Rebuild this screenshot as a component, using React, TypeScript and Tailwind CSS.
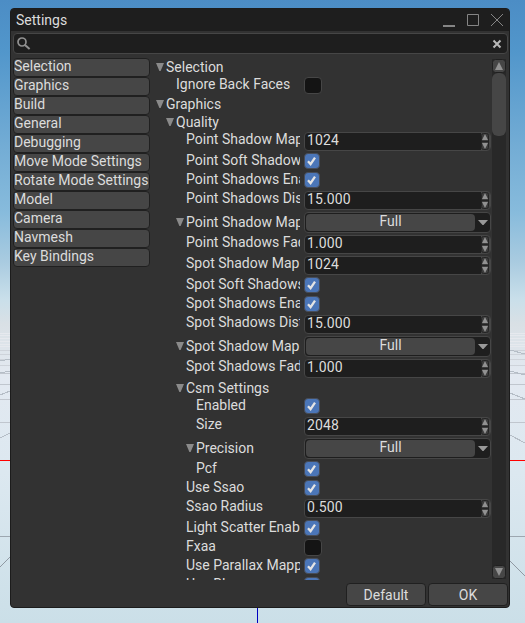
import React from "react";

type Kind = "header" | "check" | "num" | "combo";
type Row = { kind: Kind; label: string; level: number; value?: string; on?: boolean };

const rows: Row[] = [
  { kind: "header", label: "Selection", level: 0 },
  { kind: "check", label: "Ignore Back Faces", level: 1 },
  { kind: "header", label: "Graphics", level: 0 },
  { kind: "header", label: "Quality", level: 1 },
  { kind: "num", label: "Point Shadow Map", level: 2, value: "1024" },
  { kind: "check", label: "Point Soft Shadow", level: 2, on: true },
  { kind: "check", label: "Point Shadows Ena", level: 2, on: true },
  { kind: "num", label: "Point Shadows Dist", level: 2, value: "15.000" },
  { kind: "combo", label: "Point Shadow Map", level: 2, value: "Full" },
  { kind: "num", label: "Point Shadows Fad", level: 2, value: "1.000" },
  { kind: "num", label: "Spot Shadow Map", level: 2, value: "1024" },
  { kind: "check", label: "Spot Soft Shadows", level: 2, on: true },
  { kind: "check", label: "Spot Shadows Ena", level: 2, on: true },
  { kind: "num", label: "Spot Shadows Dist", level: 2, value: "15.000" },
  { kind: "combo", label: "Spot Shadow Map", level: 2, value: "Full" },
  { kind: "num", label: "Spot Shadows Fad", level: 2, value: "1.000" },
  { kind: "header", label: "Csm Settings", level: 2 },
  { kind: "check", label: "Enabled", level: 3, on: true },
  { kind: "num", label: "Size", level: 3, value: "2048" },
  { kind: "combo", label: "Precision", level: 3, value: "Full" },
  { kind: "check", label: "Pcf", level: 3, on: true },
  { kind: "check", label: "Use Ssao", level: 2, on: true },
  { kind: "num", label: "Ssao Radius", level: 2, value: "0.500" },
  { kind: "check", label: "Light Scatter Enab", level: 2, on: true },
  { kind: "check", label: "Fxaa", level: 2 },
  { kind: "check", label: "Use Parallax Mapp", level: 2, on: true },
  { kind: "check", label: "Use Bloom", level: 2, on: true },
];

const sections = ["Selection", "Graphics", "Build", "General", "Debugging", "Move Mode Settings", "Rotate Mode Settings", "Model", "Camera", "Navmesh", "Key Bindings"];

const rowHeight: Record<Kind, string> = { header: "h-[18px]", check: "h-[19px]", num: "h-[21px]", combo: "h-[23px]" };
const labelPad: Record<Kind, string> = { header: "", check: "-mt-px", num: "-mt-px", combo: "mt-[2px]" };
const indent = ["pl-0", "pl-[10px]", "pl-[20px]", "pl-[30px]"];

function Arrow() {
  return (
    <svg width="10" height="16" className="shrink-0" viewBox="0 0 10 16">
      <path d="M1 4h8L5.6 12H4.4z" fill="#8a8a8a" />
    </svg>
  );
}

function Check({ on }: { on?: boolean }) {
  if (!on) return <div className="h-[17px] w-[18px] rounded-[4px] border border-[#464646] bg-[#141414]" />;
  return (
    <div className="h-[16px] w-[16px] rounded-[4px] border border-[#484d58] bg-[#4b76b8]">
      <svg width="14" height="14" viewBox="0 0 14 14">
        <path d="M3 7.2l2.6 3L10 3.6" fill="none" stroke="#e4e4e4" strokeWidth="2.3" />
      </svg>
    </div>
  );
}

function NumberField({ value }: { value?: string }) {
  return (
    <div className="flex h-[19px] w-[187px] overflow-hidden rounded-[4px] border border-[#464646] bg-[#1e1e1e]">
      <span className="flex-1 pl-[2px] leading-[14px] tracking-[0.1px]">{value}</span>
      <svg width="9" height="17" viewBox="0 0 9 17">
        <rect width="9" height="17" fill="#464646" />
        <rect x="0.5" y="0.5" width="7" height="16" rx="2" fill="#3c3c3c" stroke="#242424" />
        <path d="M4 1l3 6H1zM1 10h6l-3 6z" fill="#919191" />
        <path d="M1 8.5h6" stroke="#242424" />
      </svg>
    </div>
  );
}

function Combo({ value }: { value?: string }) {
  return (
    <div className="flex h-[21px] w-[187px] rounded-[4px] border border-[#464646] bg-[#1e1e1e] py-px pl-px">
      <span className="h-[17px] w-[169px] rounded-[4px] bg-[#464646] text-center leading-[15px]">{value}</span>
      <svg width="15" height="17" viewBox="0 0 15 17">
        <path d="M3 6h10L8.5 11h-1z" fill="#999" />
      </svg>
    </div>
  );
}

function SettingRow({ row }: { row: Row }) {
  const hasArrow = row.kind === "header" || row.kind === "combo";
  return (
    <div className={`flex shrink-0 ${rowHeight[row.kind]}`}>
      <div className={`flex h-[18px] w-[145px] shrink-0 overflow-hidden ${indent[row.level]} ${labelPad[row.kind]}`}>
        {hasArrow ? <Arrow /> : <span className="w-[10px] shrink-0" />}
        <span className="whitespace-nowrap pl-px leading-4">{row.label}</span>
      </div>
      <div className="ml-1">
        {row.kind === "check" && <Check on={row.on} />}
        {row.kind === "num" && <NumberField value={row.value} />}
        {row.kind === "combo" && <Combo value={row.value} />}
      </div>
    </div>
  );
}

function Backdrop() {
  const ys = [333, 335, 338, 341, 344, 346, 350, 354, 359, 365, 373, 384, 399, 422, 536];
  return (
    <svg className="absolute inset-0" width="525" height="623" shapeRendering="crispEdges">
      <defs>
        <linearGradient id="sky" x1="0" y1="0" x2="0" y2="1">
          <stop offset="0" stopColor="#4c8dc5" />
          <stop offset="0.08" stopColor="#5196cb" />
          <stop offset="0.24" stopColor="#74add5" />
          <stop offset="0.34" stopColor="#87bbdc" />
          <stop offset="0.42" stopColor="#a9cbe0" />
          <stop offset="0.48" stopColor="#c9dfea" />
          <stop offset="0.52" stopColor="#d9e0e5" />
          <stop offset="0.6" stopColor="#e3e9f1" />
          <stop offset="0.76" stopColor="#dce8f0" />
          <stop offset="1" stopColor="#cbdfe8" />
        </linearGradient>
      </defs>
      <rect width="525" height="623" fill="url(#sky)" />
      {ys.map((y, i) => (
        <path key={y} d={`M0 ${y + 0.5}H525`} stroke={i < 6 ? "#e6e9ee" : i < 10 ? "#ced3da" : i < 14 ? "#c0c6ce" : "#9da7b0"} />
      ))}
      <g fill="none" stroke="#b5bdc6">
        <path d="M0 361l10-2M0 373l10-2M0 395l10-4M0 438l10-5M510 350l15 4M510 371l15 4M510 393l15 6M510 435l15 8" />
        <path d="M0 567l11-11M509 560l16 16" stroke="#9099a3" />
      </g>
      <path d="M0 460.5H525" stroke="#ff0000" />
      <path d="M257.5 600V623" stroke="#0000c0" />
    </svg>
  );
}

export default function App() {
  return (
    <div className="relative h-[623px] w-[525px] overflow-hidden pl-[10px] pt-2 font-['Roboto','Noto_Sans',sans-serif] text-[14px] text-[#dcdcdc]">
      <Backdrop />
      <div className="relative flex h-[600px] w-[500px] flex-col overflow-hidden rounded-[4px] border border-[#1c1c1c] bg-[#323232]">
        <div className="flex h-[22px] shrink-0 items-center justify-between bg-[#1e1e1e] pl-[5px] pr-[5px]">
          <span className="leading-[22px]">Settings</span>
          <svg width="62" height="14" viewBox="0 0 62 14" fill="none" stroke="#858585">
            <path d="M1 13h12" strokeWidth="2" />
            <path d="M25.5 1.5h11v11h-11z" />
            <path d="M49 1l12 12M61 1L49 13" />
          </svg>
        </div>
        <div className="ml-[2px] mt-[2px] flex h-[21px] w-[495px] shrink-0 items-center justify-between rounded-[4px] border border-[#464646] bg-[#1e1e1e] pl-[3px] pr-[5px]">
          <svg width="14" height="14" viewBox="0 0 14 14" fill="none" stroke="#919191">
            <circle cx="5" cy="5" r="4" strokeWidth="1.7" />
            <path d="M8 8l4.6 4" strokeWidth="2" />
          </svg>
          <svg width="10" height="10" viewBox="0 0 10 10" stroke="#b9b9b9" strokeWidth="2">
            <path d="M1.5 1.5l7 7M8.5 1.5l-7 7" />
          </svg>
        </div>
        <div className="flex h-[525px] shrink-0 pl-[2px] pt-[4px]">
          <div className="w-[137px] shrink-0">
            {sections.map((s) => (
              <div key={s} className="h-[19px] whitespace-nowrap rounded-[4px] border border-[#202020] bg-[#464646] leading-[15px]">
                {s}
              </div>
            ))}
          </div>
          <div className="ml-[5px] mt-px flex h-[521px] w-[336px] shrink-0 flex-col overflow-hidden">
            {rows.map((r, i) => (
              <SettingRow key={i} row={r} />
            ))}
          </div>
          <div className="ml-px mt-px flex h-[520px] w-[14px] flex-col justify-between bg-[#282828]">
            <div>
              <svg width="14" height="14" viewBox="0 0 14 14">
                <rect x="0.5" y="0.5" width="13" height="13" rx="3" fill="#464646" stroke="#202020" />
                <path d="M7 3l4 8H3z" fill="#919191" />
              </svg>
              <div className="h-[63px] rounded-[6px] bg-[#464646]" />
            </div>
            <svg width="14" height="14" viewBox="0 0 14 14">
              <rect x="0.5" y="0.5" width="13" height="13" rx="3" fill="#464646" stroke="#202020" />
              <path d="M3 3h8l-4 8z" fill="#919191" />
            </svg>
          </div>
        </div>
        <div className="mt-[4px] flex justify-end gap-[2px] pr-px text-center leading-[22px]">
          <div className="h-[23px] w-[80px] rounded-[4px] border border-[#202020] bg-[#464646]">Default</div>
          <div className="h-[23px] w-[80px] rounded-[4px] border border-[#202020] bg-[#464646]">OK</div>
        </div>
      </div>
    </div>
  );
}
